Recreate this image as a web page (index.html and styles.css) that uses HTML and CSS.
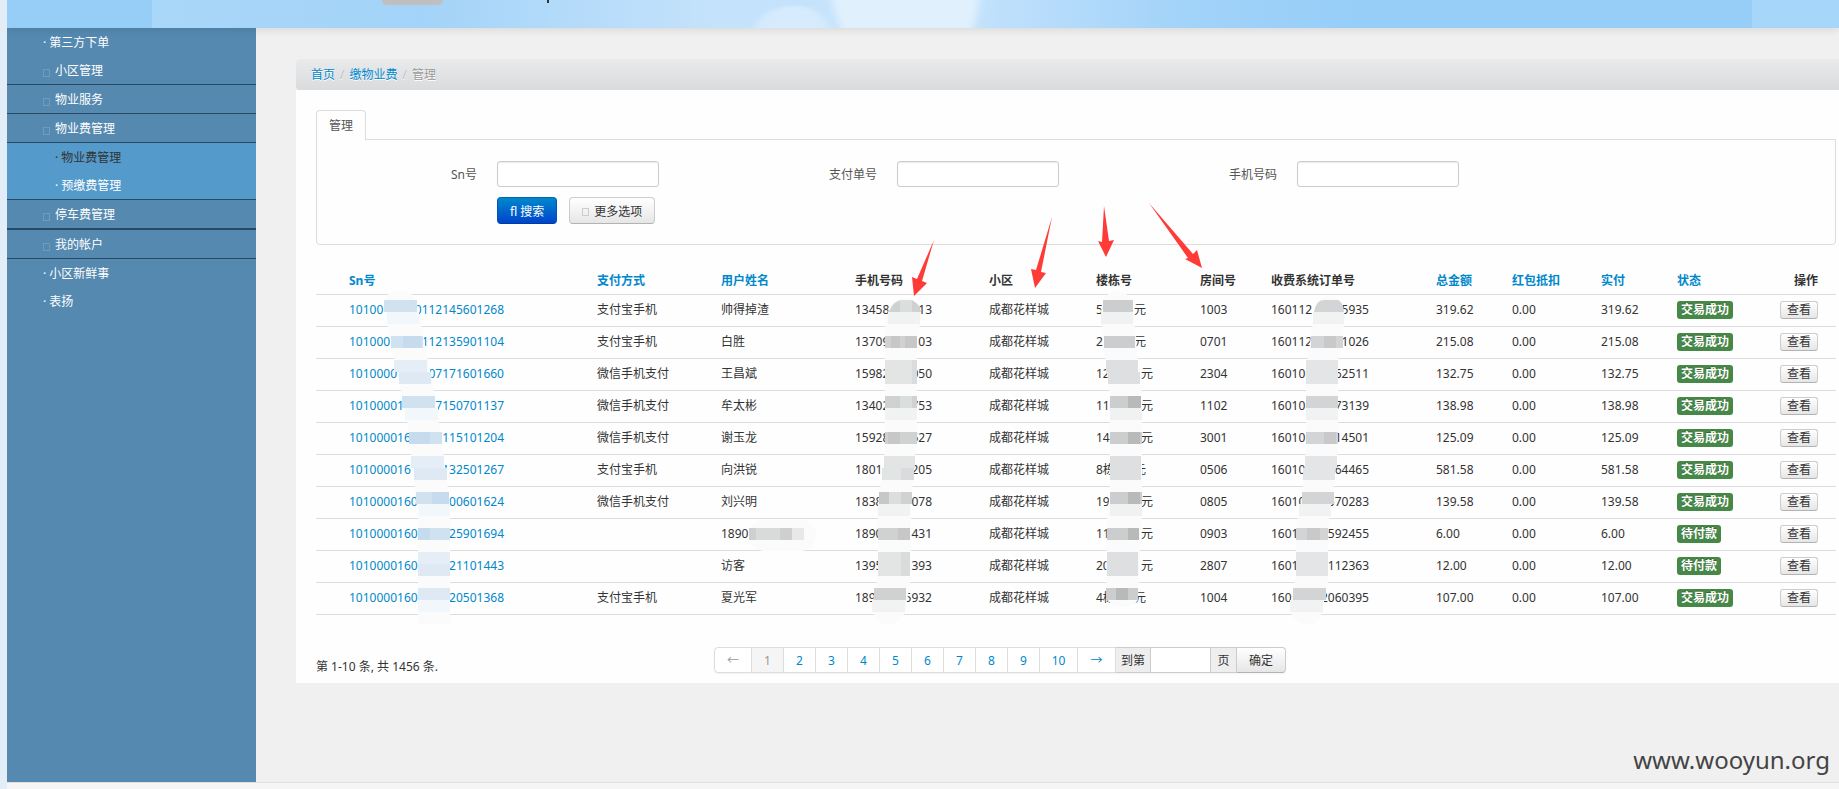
FILE: index.html
```html
<!DOCTYPE html>
<html lang="zh-CN">
<head>
    <meta charset="UTF-8">
    <meta name="viewport" content="width=device-width, initial-scale=1.0">
    <title>物业费管理</title>
    <link rel="stylesheet" href="styles.css">
</head>
<body>
    <header class="banner">
        <svg class="banner-bg" viewBox="0 0 1832 28" preserveAspectRatio="none" aria-hidden="true">
            <defs>
                <linearGradient id="sky" x1="0" x2="1" y1="0" y2="0">
                    <stop offset="0" stop-color="#a9d7fa"/>
                    <stop offset="0.17" stop-color="#a3d3f8"/>
                    <stop offset="0.35" stop-color="#c4e2fb"/>
                    <stop offset="0.5" stop-color="#c6e3fc"/>
                    <stop offset="0.64" stop-color="#a3d3f9"/>
                    <stop offset="0.75" stop-color="#97cef8"/>
                    <stop offset="1" stop-color="#97cef8"/>
                </linearGradient>
                <filter id="soft" x="-20%" width="140%"><feGaussianBlur stdDeviation="4 1"/></filter>
            </defs>
            <rect width="1832" height="28" fill="#97cef8"/>
            <rect x="145" width="1600" height="28" fill="url(#sky)"/>
            <rect x="1745" width="87" height="28" fill="#a6d6f9"/>
            <path d="M745 34C752 14 768 6 787 6C806 6 820 14 824 34Z" fill="#d6ebfd" filter="url(#soft)"/>
            <path d="M824 -6H973Q972 14 964 34H836Q826 14 824 -6Z" fill="#e0f0fd" filter="url(#soft)"/>
            <path d="M375 0H436Q436 5 430 5H381Q375 5 375 0Z" fill="#bfbfbf"/>
            <rect x="540" width="2" height="3" fill="#333"/>
        </svg>
    </header>

    <div class="layout">
        <nav class="sidebar">
            <a href="#" class="item">· 第三方下单</a>
            <a href="#" class="item group"><i class="box"></i>小区管理</a>
            <a href="#" class="item group"><i class="box"></i>物业服务</a>
            <a href="#" class="item group"><i class="box"></i>物业费管理</a>
            <div class="submenu">
                <a href="#" class="item current">· 物业费管理</a>
                <a href="#" class="item">· 预缴费管理</a>
            </div>
            <a href="#" class="item group last"><i class="box"></i>停车费管理</a>
            <a href="#" class="item group"><i class="box"></i>我的帐户</a>
            <a href="#" class="item">· 小区新鲜事</a>
            <a href="#" class="item">· 表扬</a>
        </nav>

        <main class="content">
            <div class="breadcrumb">
                <a href="#">首页</a><span class="divider">/</span><a href="#">缴物业费</a><span class="divider">/</span><span class="active">管理</span>
            </div>

            <div class="panel">
                <div class="tabs"><a href="#" class="tab">管理</a></div>
                <form class="search">
                    <div class="fields">
                        <div class="field">
                            <label for="sn">Sn号</label>
                            <input type="text" id="sn">
                        </div>
                        <div class="field">
                            <label for="payNo">支付单号</label>
                            <input type="text" id="payNo">
                        </div>
                        <div class="field">
                            <label for="mobile">手机号码</label>
                            <input type="text" id="mobile">
                        </div>
                    </div>
                    <div class="actions">
                        <button type="button" class="btn btn-primary">ﬂ 搜索</button>
                        <button type="button" class="btn"><i class="box"></i>更多选项</button>
                    </div>
                </form>

                <table class="orders">
                    <colgroup>
                        <col class="c-blank"><col class="c-sn"><col class="c-pay"><col class="c-name"><col class="c-phone"><col class="c-area"><col class="c-build"><col class="c-room"><col class="c-order"><col class="c-total"><col class="c-bonus"><col class="c-paid"><col class="c-state"><col class="c-op">
                    </colgroup>
                    <thead>
                        <tr>
                            <th></th>
                            <th><a href="#">Sn号</a></th>
                            <th><a href="#">支付方式</a></th>
                            <th><a href="#">用户姓名</a></th>
                            <th>手机号码</th>
                            <th>小区</th>
                            <th>楼栋号</th>
                            <th>房间号</th>
                            <th>收费系统订单号</th>
                            <th><a href="#">总金额</a></th>
                            <th><a href="#">红包抵扣</a></th>
                            <th><a href="#">实付</a></th>
                            <th><a href="#">状态</a></th>
                            <th class="op">操作</th>
                        </tr>
                    </thead>
                    <tbody>
                        <tr>
                            <td></td>
                            <td><a href="#" class="cut sn"><span>10100</span><span>0112145601268</span></a></td>
                            <td>支付宝手机</td>
                            <td>帅得掉渣</td>
                            <td><span class="cut phone"><span>13458</span><span>13</span></span></td>
                            <td>成都花样城</td>
                            <td><span class="cut unit"><span>5</span><span>元</span></span></td>
                            <td>1003</td>
                            <td><span class="cut order"><span>160112</span><span>5935</span></span></td>
                            <td>319.62</td>
                            <td>0.00</td>
                            <td>319.62</td>
                            <td><span class="badge">交易成功</span></td>
                            <td class="op"><button type="button" class="btn btn-mini">查看</button></td>
                        </tr>
                        <tr>
                            <td></td>
                            <td><a href="#" class="cut sn"><span>101000</span><span>112135901104</span></a></td>
                            <td>支付宝手机</td>
                            <td>白胜</td>
                            <td><span class="cut phone"><span>13709</span><span>03</span></span></td>
                            <td>成都花样城</td>
                            <td><span class="cut unit"><span>2</span><span>元</span></span></td>
                            <td>0701</td>
                            <td><span class="cut order"><span>160112</span><span>1026</span></span></td>
                            <td>215.08</td>
                            <td>0.00</td>
                            <td>215.08</td>
                            <td><span class="badge">交易成功</span></td>
                            <td class="op"><button type="button" class="btn btn-mini">查看</button></td>
                        </tr>
                        <tr>
                            <td></td>
                            <td><a href="#" class="cut sn"><span>1010000</span><span>07171601660</span></a></td>
                            <td>微信手机支付</td>
                            <td>王昌斌</td>
                            <td><span class="cut phone"><span>15982</span><span>050</span></span></td>
                            <td>成都花样城</td>
                            <td><span class="cut unit wide"><span>12</span><span>元</span></span></td>
                            <td>2304</td>
                            <td><span class="cut order"><span>16010</span><span>62511</span></span></td>
                            <td>132.75</td>
                            <td>0.00</td>
                            <td>132.75</td>
                            <td><span class="badge">交易成功</span></td>
                            <td class="op"><button type="button" class="btn btn-mini">查看</button></td>
                        </tr>
                        <tr>
                            <td></td>
                            <td><a href="#" class="cut sn"><span>10100001</span><span>7150701137</span></a></td>
                            <td>微信手机支付</td>
                            <td>牟太彬</td>
                            <td><span class="cut phone"><span>13402</span><span>753</span></span></td>
                            <td>成都花样城</td>
                            <td><span class="cut unit wide"><span>11</span><span>元</span></span></td>
                            <td>1102</td>
                            <td><span class="cut order"><span>16010</span><span>73139</span></span></td>
                            <td>138.98</td>
                            <td>0.00</td>
                            <td>138.98</td>
                            <td><span class="badge">交易成功</span></td>
                            <td class="op"><button type="button" class="btn btn-mini">查看</button></td>
                        </tr>
                        <tr>
                            <td></td>
                            <td><a href="#" class="cut sn"><span>101000016</span><span>115101204</span></a></td>
                            <td>微信手机支付</td>
                            <td>谢玉龙</td>
                            <td><span class="cut phone"><span>15928</span><span>527</span></span></td>
                            <td>成都花样城</td>
                            <td><span class="cut unit wide"><span>14</span><span>元</span></span></td>
                            <td>3001</td>
                            <td><span class="cut order"><span>16010</span><span>14501</span></span></td>
                            <td>125.09</td>
                            <td>0.00</td>
                            <td>125.09</td>
                            <td><span class="badge">交易成功</span></td>
                            <td class="op"><button type="button" class="btn btn-mini">查看</button></td>
                        </tr>
                        <tr>
                            <td></td>
                            <td><a href="#" class="cut sn"><span>101000016</span><span>132501267</span></a></td>
                            <td>支付宝手机</td>
                            <td>向洪锐</td>
                            <td><span class="cut phone"><span>1801</span><span>205</span></span></td>
                            <td>成都花样城</td>
                            <td><span class="cut unit"><span>8栋</span><span>元</span></span></td>
                            <td>0506</td>
                            <td><span class="cut order"><span>16010</span><span>64465</span></span></td>
                            <td>581.58</td>
                            <td>0.00</td>
                            <td>581.58</td>
                            <td><span class="badge">交易成功</span></td>
                            <td class="op"><button type="button" class="btn btn-mini">查看</button></td>
                        </tr>
                        <tr>
                            <td></td>
                            <td><a href="#" class="cut sn"><span>1010000160</span><span>00601624</span></a></td>
                            <td>微信手机支付</td>
                            <td>刘兴明</td>
                            <td><span class="cut phone"><span>1838</span><span>078</span></span></td>
                            <td>成都花样城</td>
                            <td><span class="cut unit wide"><span>19</span><span>元</span></span></td>
                            <td>0805</td>
                            <td><span class="cut order"><span>16010</span><span>570283</span></span></td>
                            <td>139.58</td>
                            <td>0.00</td>
                            <td>139.58</td>
                            <td><span class="badge">交易成功</span></td>
                            <td class="op"><button type="button" class="btn btn-mini">查看</button></td>
                        </tr>
                        <tr>
                            <td></td>
                            <td><a href="#" class="cut sn"><span>1010000160</span><span>25901694</span></a></td>
                            <td></td>
                            <td>1890</td>
                            <td><span class="cut phone"><span>1890</span><span>431</span></span></td>
                            <td>成都花样城</td>
                            <td><span class="cut unit wide"><span>11</span><span>元</span></span></td>
                            <td>0903</td>
                            <td><span class="cut order"><span>1601</span><span>592455</span></span></td>
                            <td>6.00</td>
                            <td>0.00</td>
                            <td>6.00</td>
                            <td><span class="badge">待付款</span></td>
                            <td class="op"><button type="button" class="btn btn-mini">查看</button></td>
                        </tr>
                        <tr>
                            <td></td>
                            <td><a href="#" class="cut sn"><span>1010000160</span><span>21101443</span></a></td>
                            <td></td>
                            <td>访客</td>
                            <td><span class="cut phone"><span>1395</span><span>5393</span></span></td>
                            <td>成都花样城</td>
                            <td><span class="cut unit wide"><span>20</span><span>元</span></span></td>
                            <td>2807</td>
                            <td><span class="cut order"><span>1601</span><span>112363</span></span></td>
                            <td>12.00</td>
                            <td>0.00</td>
                            <td>12.00</td>
                            <td><span class="badge">待付款</span></td>
                            <td class="op"><button type="button" class="btn btn-mini">查看</button></td>
                        </tr>
                        <tr>
                            <td></td>
                            <td><a href="#" class="cut sn"><span>1010000160</span><span>20501368</span></a></td>
                            <td>支付宝手机</td>
                            <td>夏光军</td>
                            <td><span class="cut phone"><span>189</span><span>5932</span></span></td>
                            <td>成都花样城</td>
                            <td><span class="cut unit"><span>4栋</span><span>元</span></span></td>
                            <td>1004</td>
                            <td><span class="cut order"><span>160</span><span>2060395</span></span></td>
                            <td>107.00</td>
                            <td>0.00</td>
                            <td>107.00</td>
                            <td><span class="badge">交易成功</span></td>
                            <td class="op"><button type="button" class="btn btn-mini">查看</button></td>
                        </tr>
                    </tbody>
                </table>

                <div class="table-footer">
                    <div class="summary">第 1-10 条, 共 1456 条.</div>
                    <div class="pagination">
                        <a href="#" class="page arrow muted">←</a>
                        <a href="#" class="page muted on">1</a>
                        <a href="#" class="page">2</a>
                        <a href="#" class="page">3</a>
                        <a href="#" class="page">4</a>
                        <a href="#" class="page">5</a>
                        <a href="#" class="page">6</a>
                        <a href="#" class="page">7</a>
                        <a href="#" class="page">8</a>
                        <a href="#" class="page">9</a>
                        <a href="#" class="page arrow">10</a>
                        <a href="#" class="page arrow">→</a>
                        <label class="addon" for="pageNo">到第</label>
                        <input type="text" id="pageNo">
                        <span class="addon unit-label">页</span>
                        <button type="button" class="btn go">确定</button>
                    </div>
                </div>
            </div>
        </main>
    </div>

    <footer class="bottom"></footer>

    <!-- mosaic strips and arrows over the table -->
    <svg class="marks" aria-hidden="true">
        <g fill="#fbfbfc">
            <path d="M384 306Q386 290 399 290Q413 290 417 304L435 396L442 444L450 504V624H418V516L409 432L402 396Z"/>
            <path d="M885 330Q887 298 905 298Q921 300 921 320L917 336V432L911 504V576L906 608Q902 624 888 624Q874 624 872 606L878 576V504L885 450Z"/>
            <path d="M1101 312Q1103 291 1117 291Q1133 292 1133 312L1142 396V504L1138 600Q1134 607 1122 607Q1108 607 1106 594L1107 516L1110 492V396L1104 348Z"/>
            <path d="M1313 320Q1316 296 1330 296Q1344 298 1345 320L1338 360V450L1328 530V580L1322 612Q1320 624 1308 624Q1292 624 1290 606L1296 576V528L1302 498L1306 450V372Z"/>
            <rect x="749" y="520" width="67" height="31" rx="15"/>
        </g>
        <path fill="#d0e1ef" d="M384 300h33v12h-33zM391 336h32v12h-32zM402 396h33v12h-33zM409 432h33v12h-33zM416 492h33v12h-33zM418 528h32v12h-32z"/>
        <path fill="#c6dbed" d="M403 336h18v12h-18zM409 432h21v12h-21zM432 492h17v12h-17zM418 528h12v12h-12z"/>
        <path fill="#e5eef7" d="M394 360h33v12h-33zM411 456h33v12h-33zM418 552h32v12h-32z"/>
        <path fill="#dee9f4" d="M399 372h32v12h-32zM414 468h33v12h-33zM418 564h32v12h-32zM418 588h32v12h-32z"/>
        <path fill="#f2f7fc" d="M387 312h32v12h-32zM405 408h33v12h-33zM419 504h31v12h-31zM418 600h32v12h-32z"/>

        <path fill="#d0d1d1" d="M889 312Q893 300 903 300H912Q920 304 921 312zM885 336h32v12h-32zM885 396h32v12h-32zM885 432h32v12h-32zM879 492h33v12h-33zM878 528h32v12h-32zM874 588h32v12h-32z"/>
        <path fill="#c7c7c7" d="M891 336h9v12h-9zM905 336h12v12h-12zM888 432h12v12h-12zM879 492h10v12h-10zM898 528h12v12h-12z"/>
        <path fill="#dbdedf" d="M900 300h12v12h-12zM900 396h12v12h-12zM889 492h12v12h-12z"/>
        <path fill="#e3e5e5" d="M885 360h32v24h-32zM884 456h31v12h-31zM882 468h32v12h-32zM878 552h32v24h-32z"/>
        <path fill="#d9dbdc" d="M912 360h5v24h-5zM901 468h13v12h-13zM901 552h9v24h-9z"/>
        <path fill="#f1f2f2" d="M888 312h32v12h-32zM885 408h32v12h-32zM878 504h32v12h-32zM872 600h33v12h-33z"/>

        <path fill="#cbcdce" d="M1103 300h30v12h-30zM1104 336h31v12h-31zM1110 396h31v12h-31zM1110 432h32v12h-32zM1110 492h32v12h-32zM1107 528h32v12h-32zM1106 588h32v12h-32z"/>
        <path fill="#b8bab9" d="M1128 396h13v12h-13zM1128 432h12v12h-12zM1128 492h12v12h-12zM1128 528h11v12h-11zM1116 588h12v12h-12z"/>
        <path fill="#dddfe0" d="M1106 360h32v12h-32zM1108 372h32v12h-32zM1110 456h31v24h-31zM1107 552h31v24h-31z"/>
        <path fill="#f0f1f1" d="M1101 312h32v12h-32zM1110 408h32v12h-32zM1110 504h32v12h-32z"/>

        <path fill="#d2d4d5" d="M1314 312Q1316 300 1324 300H1338Q1343 302 1344 312zM1311 336h32v12h-32zM1306 396h32v12h-32zM1306 432h32v12h-32zM1302 492h32v12h-32zM1296 528h32v12h-32zM1293 588h33v12h-33z"/>
        <path fill="#c9c9ca" d="M1324 336h12v12h-12zM1324 432h12v12h-12zM1307 528h13v12h-13z"/>
        <path fill="#e3e5e6" d="M1306 360h32v24h-32zM1305 456h32v12h-32zM1303 468h32v12h-32zM1296 552h32v24h-32z"/>
        <path fill="#f1f2f2" d="M1313 312h31v12h-31zM1306 408h32v12h-32zM1299 504h32v12h-32zM1290 600h33v12h-33z"/>

        <path fill="#cfcfcf" d="M749 528h43v12h-43z"/>
        <path fill="#d9dbdb" d="M756 528h24v12h-24z"/>
        <path fill="#e7e8e8" d="M792 528h12v12h-12z"/>
        <path fill="#ff3b38" d="M934 240L922 281L927 283L914 296L912 277L917 279ZM1052 217L1041 272L1046 273L1035 288L1031 269L1036 270ZM1104 206L1109 241L1114 240L1106 257L1098 241L1102 242ZM1149 203L1193 254L1197 250L1202 268L1185 259L1188 258Z"/>
    </svg>
    <div class="watermark">www.wooyun.org</div>
</body>
</html>
```
FILE: styles.css
```css
* {
    box-sizing: border-box;
}
body {
    margin: 0;
    min-height: 100vh;
    display: flex;
    flex-direction: column;
    position: relative;
    border-left: 7px solid #e3edf7;
    background-color: #f0f0f0;
    font-family: "Noto Sans", "Noto Sans CJK SC", sans-serif;
    font-size: 12px;
    line-height: 18px;
    color: #333;
}
a {
    color: #0088cc;
    text-decoration: none;
}
button, input {
    font: inherit;
    color: inherit;
}
.banner {
    height: 28px;
    position: relative;
    z-index: 1;
    box-shadow: 0 1px 10px rgba(0,0,0,0.12);
}
.banner-bg {
    display: block;
    width: 100%;
    height: 28px;
}
.layout {
    flex: 1;
    display: flex;
}

/* sidebar */
.sidebar {
    width: 249px;
    flex-shrink: 0;
    background-color: #5589b0;
}
.item {
    display: flex;
    align-items: center;
    height: 28px;
    padding: 2px 0 0 36px;
    color: #fff;
}
.group {
    height: 29px;
    border-bottom: 1px solid #264a66;
}
.group.last {
    height: 30px;
    border-bottom-width: 2px;
}
.box {
    display: inline-block;
    width: 7px;
    height: 8px;
    margin-right: 5px;
    border: 1px solid #6d9cc0;
}
.sidebar .box {
    margin-top: 4px;
}
.submenu {
    background-color: #549aca;
    border-bottom: 1px solid #264a66;
}
.submenu .item {
    padding-left: 48px;
}
.submenu .current {
    color: #333;
}

/* content */
.content {
    flex: 1;
    min-width: 0;
    padding: 31px 0 0 40px;
}
.breadcrumb {
    height: 31px;
    padding: 7px 15px 6px;
    border-radius: 4px 0 0 4px;
    background: linear-gradient(#e9eaeb, #dadbdd);
    text-shadow: 0 1px 0 #fff;
}
.divider {
    padding: 0 5px;
    color: #bbb;
}
.breadcrumb .active {
    color: #999;
}
.panel {
    padding: 20px 3px 8px 20px;
    background-color: #fefefe;
}
.tabs {
    display: flex;
}
.tab {
    height: 30px;
    padding: 6px 12px 5px;
    margin-bottom: -1px;
    border: 1px solid #ddd;
    border-bottom: none;
    border-radius: 4px 4px 0 0;
    background-color: #fefefe;
    color: #555;
    position: relative;
}
.search {
    padding: 21px 0 20px;
    border: 1px solid #ddd;
    border-radius: 0 0 4px 4px;
}
.fields {
    display: flex;
}
.field {
    width: 400px;
    display: flex;
    align-items: center;
    gap: 20px;
}
.field label {
    width: 160px;
    padding-top: 2px;
    text-align: right;
    color: #555;
}
.field input {
    width: 162px;
    height: 26px;
    border: 1px solid #ccc;
    border-radius: 3px;
    background-color: #fff;
    box-shadow: inset 0 1px 1px rgba(0,0,0,0.08);
}
.actions {
    display: flex;
    gap: 12px;
    padding: 10px 0 0 180px;
}
.btn {
    height: 27px;
    padding: 2px 12px 0;
    border: 1px solid #ccc;
    border-bottom-color: #b3b3b3;
    border-radius: 4px;
    background: linear-gradient(#fff, #e6e6e6);
    line-height: 18px;
    white-space: nowrap;
    cursor: pointer;
}
.btn .box {
    border-color: #ccc;
}
.btn-primary {
    border-color: #0064b0 #0055b0 #003ba0;
    background: linear-gradient(#0088cc, #0044cc);
    color: #fff;
}

/* orders table */
.orders {
    width: 100%;
    margin-top: 20px;
    table-layout: fixed;
    border-collapse: collapse;
}
.c-blank { width: 25px; }
.c-sn { width: 248px; }
.c-pay { width: 124px; }
.c-name, .c-phone { width: 134px; }
.c-area { width: 107px; }
.c-build { width: 104px; }
.c-room { width: 71px; }
.c-order { width: 165px; }
.c-total, .c-paid { width: 76px; }
.c-bonus { width: 89px; }
.c-state { width: 95px; }
.c-op { width: 72px; }
.orders th, .orders td {
    height: 32px;
    padding: 0 0 0 8px;
    border-bottom: 1px solid #ddd;
    text-align: left;
    white-space: nowrap;
}
.orders th {
    height: 29px;
    padding-top: 3px;
}
.orders .op {
    padding-right: 18px;
    text-align: right;
}
.orders td:first-child, .orders th:first-child {
    padding: 0;
}
.cut {
    display: flex;
    justify-content: space-between;
}
.sn {
    width: 155px;
}
.phone {
    width: 77px;
}
.unit {
    width: 50px;
}
.unit.wide {
    width: 57px;
}
.order {
    width: 98px;
}
.badge {
    display: inline-block;
    padding: 0 4px;
    border-radius: 3px;
    background-color: #468847;
    color: #fff;
    font-weight: bold;
    text-shadow: 0 -1px 0 rgba(0,0,0,0.25);
}
.btn-mini {
    height: 18px;
    padding: 0 6px;
    border-radius: 3px;
    line-height: 16px;
}

/* pager */
.table-footer {
    display: flex;
    align-items: flex-start;
    margin-top: 32px;
}
.summary {
    width: 398px;
    padding-top: 12px;
    line-height: 16px;
}
.pagination {
    display: flex;
    height: 26px;
    border-radius: 4px;
    box-shadow: 0 1px 2px rgba(0,0,0,0.05);
}
.page {
    width: 32px;
    padding-top: 1px;
    border: 1px solid #ddd;
    border-left: none;
    line-height: 24px;
    text-align: center;
    background-color: #fff;
}
.page.arrow {
    width: 38px;
}
.page:first-child {
    border-left: 1px solid #ddd;
    border-radius: 4px 0 0 4px;
}
.muted {
    color: #999;
}
.on {
    background-color: #f5f5f5;
}
.addon {
    width: 35px;
    padding-top: 1px;
    border: 1px solid #ccc;
    border-left: none;
    background-color: #eee;
    line-height: 24px;
    text-align: center;
}
.unit-label {
    width: 26px;
}
.pagination input {
    width: 60px;
    border: 1px solid #ccc;
    border-left: none;
    background-color: #fff;
}
.go {
    height: 26px;
    border-left: none;
    border-radius: 0 4px 4px 0;
}
.bottom {
    height: 7px;
    border-top: 1px solid #e0e0e0;
    background-color: #f5f5f5;
}
.marks {
    position: absolute;
    top: 0;
    left: -7px;
    width: calc(100% + 7px);
    height: 100%;
    pointer-events: none;
}
.watermark {
    position: absolute;
    right: 9px;
    bottom: 11px;
    font-size: 24px;
    line-height: 36px;
    color: #444;
}
```
